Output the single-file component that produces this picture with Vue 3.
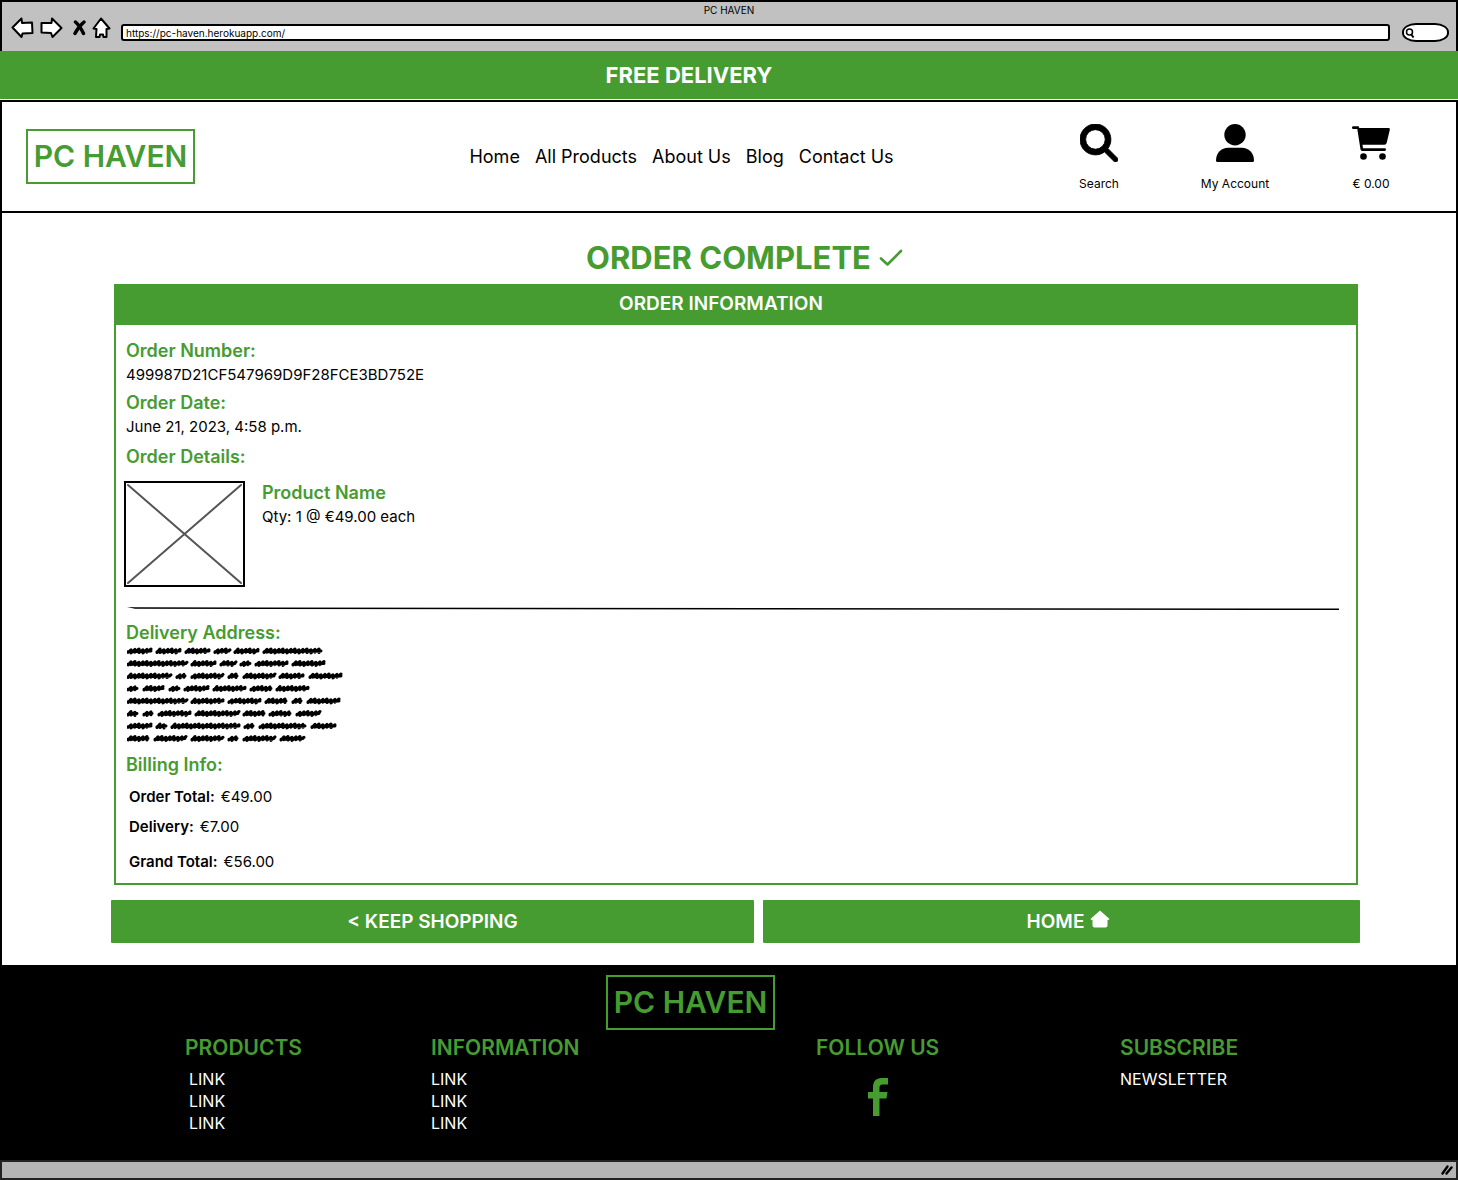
<script setup>
const navLinks = ['Home', 'All Products', 'About Us', 'Blog', 'Contact Us']
const footerLinks = ['LINK', 'LINK', 'LINK']

const orderFields = [
  { label: 'Order Number:', value: '499987D21CF547969D9F28FCE3BD752E' },
  { label: 'Order Date:', value: 'June 21, 2023, 4:58 p.m.' }
]

const totals = [
  { label: 'Order Total:', value: '€49.00' },
  { label: 'Delivery:', value: '€7.00' },
  { label: 'Grand Total:', value: '€56.00' }
]

// Start and end of every scribbled word, line by line
const addressLines = [
  [[0, 25], [29, 54], [58, 83], [87, 103], [107, 132], [136, 195]],
  [[0, 60], [64, 89], [93, 109], [113, 124], [128, 161], [165, 198]],
  [[0, 44], [49, 59], [64, 96], [101, 111], [116, 148], [152, 177], [182, 215]],
  [[0, 11], [16, 37], [42, 53], [57, 82], [86, 119], [123, 145], [149, 182]],
  [[0, 60], [64, 97], [101, 134], [138, 160], [165, 175], [180, 213]],
  [[0, 11], [16, 26], [31, 64], [68, 112], [116, 138], [142, 164], [169, 193]],
  [[0, 25], [29, 40], [44, 113], [117, 127], [132, 179], [184, 209]],
  [[0, 22], [27, 59], [64, 96], [101, 111], [116, 148], [153, 177]]
]

function scribble(line, row) {
  const y = 4 + row * 12.5
  return line
    .map(([from, to], word) => {
      let path = `M${from + 1} ${y + 1.5}`
      let up = true
      for (let x = from + 3; x <= to - 1; x += 2) {
        const swing = 1.2 + ((x * 7 + word * 3 + row) % 3) * 0.4
        path += ` L${x + (up ? 1 : -1)} ${y + (up ? -swing : swing)}`
        up = !up
      }
      return `${path} M${from + 1} ${y + 0.7} L${to - 1} ${y}`
    })
    .join(' ')
}
</script>

<template>
  <div class="window">
    <header class="chrome">
      <div class="chrome-title">PC HAVEN</div>
      <div class="chrome-bar">
        <button class="tool" aria-label="Back">
          <svg width="23" height="22" viewBox="0 0 23 22"><path class="sketch" d="M1.500 10.500 10.500 1.500 11 6 21 5.500 21.500 16 11.500 16.500 10.500 20Z" /></svg>
        </button>
        <button class="tool" aria-label="Forward">
          <svg width="23" height="22" viewBox="0 0 23 22"><path class="sketch" d="M21.500 11 12 1.500 11.500 6 1.500 6 1.500 15.500 11 16 12.500 20Z" /></svg>
        </button>
        <button class="tool stop" aria-label="Stop">
          <svg width="13" height="16" viewBox="0 0 13 16"><path d="M2.500 2Q7 6 10.500 13.500M11 2Q5 7 2 13.500" fill="none" stroke="#000" stroke-width="3.400" stroke-linecap="round" /></svg>
        </button>
        <button class="tool" aria-label="Home page">
          <svg width="19" height="22" viewBox="0 0 19 22"><path class="sketch" d="M9 1.500 1.500 11.500 4.500 12 4 20 7.500 20 8 17.500 11 17.500 11.500 20 14.500 20 14.500 12 17.500 11.500Z" /></svg>
        </button>
        <input class="address" type="text" aria-label="Address" value="https://pc-haven.herokuapp.com/" />
        <label class="finder">
          <svg width="10" height="10" viewBox="0 0 10 10"><circle cx="4.500" cy="4" r="3" fill="none" stroke="#000" stroke-width="1.500" /><path d="M6 6 8.500 9.500" stroke="#000" stroke-width="2" /></svg>
          <input type="text" aria-label="Search the web" />
        </label>
      </div>
    </header>

    <div class="promo">FREE DELIVERY</div>

    <div class="site-header">
      <a class="logo" href="#">PC HAVEN</a>
      <nav class="nav">
        <a v-for="link in navLinks" :key="link" href="#">{{ link }}</a>
      </nav>
      <div class="actions">
        <a href="#">
          <svg width="38" height="38" viewBox="0 0 512 512"><path d="M416 208c0 45.900-14.900 88.300-40 122.700L502.600 457.400c12.500 12.500 12.500 32.800 0 45.300s-32.800 12.500-45.300 0L330.700 376c-34.400 25.200-76.800 40-122.700 40C93.100 416 0 322.900 0 208S93.100 0 208 0s208 93.100 208 208zM208 340a132 132 0 1 0 0-264 132 132 0 1 0 0 264z" stroke="#000" stroke-width="12" /></svg>
          Search
        </a>
        <a href="#">
          <svg width="38" height="38" viewBox="0 0 38 38"><circle cx="19" cy="10.700" r="10.700" /><path d="M0 36.500C0 28.500 5.500 23.700 12 23.700H26C32.500 23.700 38 28.500 38 36.500Q38 38 36.500 38H1.500Q0 38 0 36.500Z" /></svg>
          My Account
        </a>
        <a href="#">
          <svg width="38" height="38" viewBox="0 0 38 38">
            <path d="M6.500 4H36.500Q38.200 4 37.800 5.800L34.800 18.500Q34.300 20.700 32.300 20.700H10.500L11 24.300H32.800Q34 24.300 34 25.600 34 27 32.800 27H10.200Q8.800 27 8.500 25.600L5.300 5H1.300Q0 5 0 3.500 0 2.200 1.300 2.200H6Q7.300 2.200 7.300 3.500Z" />
            <circle cx="11.500" cy="32.500" r="3.300" /><circle cx="30.500" cy="32.500" r="3.300" />
          </svg>
          € 0.00
        </a>
      </div>
    </div>

    <main class="content">
      <h1 class="title">
        ORDER COMPLETE
        <svg width="24" height="18" viewBox="0 0 24 18"><path d="M2 9.500 8.500 15.500 22 2" fill="none" stroke="currentColor" stroke-width="2.600" stroke-linecap="round" stroke-linejoin="round" /></svg>
      </h1>

      <section class="card">
        <h2 class="card-title">ORDER INFORMATION</h2>
        <div class="card-body">
          <div v-for="field in orderFields" :key="field.label" class="field">
            <h3>{{ field.label }}</h3>
            <p>{{ field.value }}</p>
          </div>
          <h3 class="details-title">Order Details:</h3>
          <div class="product">
            <svg width="121" height="106" viewBox="0 0 121 106" role="img" aria-label="Product image">
              <rect x="1" y="1" width="119" height="104" fill="#fff" stroke="#000" stroke-width="2" />
              <path d="M4 4 117 102M117 4 4 102" stroke="#555" stroke-width="2" stroke-linecap="round" />
            </svg>
            <div>
              <h3>Product Name</h3>
              <p>Qty: 1 @ €49.00 each</p>
            </div>
          </div>
          <svg class="rule" height="4" viewBox="0 0 1212 4" preserveAspectRatio="none" aria-hidden="true"><path d="M0 0 8 0.300 1212 1.500V3L8 1.800Z" /></svg>
          <h3>Delivery Address:</h3>
          <svg class="scribbles" width="216" height="96" viewBox="0 0 216 96" role="img" aria-label="Address lines">
            <path v-for="(line, row) in addressLines" :key="row" :d="scribble(line, row)" />
          </svg>
          <h3>Billing Info:</h3>
          <dl class="totals">
            <div v-for="total in totals" :key="total.label">
              <dt>{{ total.label }}</dt>
              <dd>{{ total.value }}</dd>
            </div>
          </dl>
        </div>
      </section>

      <div class="buttons">
        <button>&lt; KEEP SHOPPING</button>
        <button class="home">
          HOME
          <svg width="20" height="18" viewBox="0 0 20 18"><path d="M10 0.500 19.500 9 18.500 10H17.500V15.500Q17.500 17.500 15.500 17.500H4.500Q2.500 17.500 2.500 15.500V10H1.500L0.500 9Z" fill="#fff" /></svg>
        </button>
      </div>
    </main>

    <footer class="footer">
      <div class="footer-brand"><a class="logo" href="#">PC HAVEN</a></div>
      <div class="footer-columns">
        <section>
          <h2>PRODUCTS</h2>
          <ul class="inset">
            <li v-for="(link, i) in footerLinks" :key="i"><a href="#">{{ link }}</a></li>
          </ul>
        </section>
        <section>
          <h2>INFORMATION</h2>
          <ul>
            <li v-for="(link, i) in footerLinks" :key="i"><a href="#">{{ link }}</a></li>
          </ul>
        </section>
        <section class="follow">
          <h2>FOLLOW US</h2>
          <a href="#" aria-label="Facebook">
            <svg width="22" height="38" viewBox="0 0 22 38"><path d="M6 38V20.500H1V14H6V9.500C6 3.500 9 0 14.500 0H21V6.500H16C13.500 6.500 12.500 7.500 12.500 9.500V14H20.500L19.500 20.500H12.500V38Z" fill="currentColor" /></svg>
          </a>
        </section>
        <section>
          <h2>SUBSCRIBE</h2>
          <ul>
            <li><a href="#">NEWSLETTER</a></li>
          </ul>
        </section>
      </div>
    </footer>

    <div class="status">
      <svg width="12" height="12" viewBox="0 0 12 12"><path d="M1.500 9.500 6.500 2.500M5.500 9.500 10.500 3.500" stroke="#000" stroke-width="2.400" stroke-linecap="round" /></svg>
    </div>
  </div>
</template>

<style>
body {
  margin: 0;
}
</style>

<style scoped>
.window {
  --green: #469b31;
  display: flex;
  flex-direction: column;
  min-height: 100vh;
  background: #fff;
  color: #000;
  font-family: Inter, "Noto Sans", sans-serif;
  font-size: 15px;
  line-height: 24px;
}

.window *,
.window {
  box-sizing: border-box;
}

h1,
h2,
h3,
p,
ul,
dl,
dd {
  margin: 0;
  padding: 0;
}

ul {
  list-style: none;
}

a {
  color: inherit;
  text-decoration: none;
}

button,
input {
  font: inherit;
  color: inherit;
}

svg {
  display: block;
  flex-shrink: 0;
}

.chrome {
  height: 51px;
  border: 2px solid #000;
  border-width: 2px 2px 0;
  background: #c1c1c1;
}

.chrome-title {
  padding-top: 1px;
  font-size: 10px;
  line-height: 14px;
  text-align: center;
}

.chrome-bar {
  display: flex;
  align-items: center;
  gap: 6px;
  padding: 0 7px 0 9px;
}

.tool {
  padding: 0;
  border: 0;
  background: none;
}

.stop {
  margin-left: 4px;
}

.sketch {
  fill: #fff;
  stroke: #000;
  stroke-width: 2;
  stroke-linejoin: round;
}

.address {
  flex: 1;
  height: 17px;
  margin: 6px 6px 0 4px;
  padding: 0 3px;
  border: 2px solid #000;
  border-radius: 3px;
  background: #fff;
  font-size: 10px;
}

.finder {
  display: flex;
  align-items: center;
  width: 47px;
  height: 19px;
  margin-top: 6px;
  padding-left: 1px;
  border: 2px solid #000;
  border-radius: 14px / 9px;
  background: #fff;
}

.tool svg {
  margin-bottom: 3px;
}

.finder input {
  width: 26px;
  height: 10px;
  padding: 0;
  border: 0;
  background: none;
  font-size: 10px;
}

.promo {
  height: 48px;
  padding-right: 80px;
  background: var(--green);
  color: #fff;
  font-size: 22px;
  font-weight: 700;
  line-height: 48px;
  text-align: center;
}

.site-header {
  display: grid;
  grid-template-columns: auto 1fr auto;
  align-items: center;
  height: 113px;
  margin-top: 1px;
  padding: 0 17px 0 24px;
  border: 2px solid #000;
}

.logo {
  display: block;
  width: 169px;
  height: 55px;
  border: 2px solid var(--green);
  color: var(--green);
  font-size: 30px;
  font-weight: 600;
  line-height: 50px;
  text-align: center;
  white-space: nowrap;
}

.nav {
  display: flex;
  justify-self: center;
  gap: 15px;
  margin-left: 137px;
  font-size: 18px;
}

.actions {
  display: flex;
  padding-top: 4px;
}

.actions a {
  display: flex;
  flex-direction: column;
  align-items: center;
  gap: 12px;
  width: 136px;
  font-size: 12px;
  line-height: 20px;
}

.content {
  flex: 1;
  padding: 25px 96px 22px 109px;
  border: 2px solid #000;
  border-width: 0 2px;
}

.title {
  display: flex;
  align-items: center;
  justify-content: center;
  gap: 8px;
  margin-bottom: 6px;
  padding-left: 18px;
  color: var(--green);
  font-size: 31px;
  font-weight: 700;
  line-height: 40px;
}

.card {
  margin: 0 2px 0 3px;
  border: 2px solid var(--green);
}

.card-title {
  height: 39px;
  padding-right: 30px;
  background: var(--green);
  color: #fff;
  font-size: 19px;
  font-weight: 600;
  line-height: 36px;
  text-align: center;
}

.card-body {
  padding: 14px 17px 9px 8px;
}

h3 {
  padding-left: 2px;
  color: var(--green);
  font-size: 18px;
  font-weight: 600;
}

.field {
  margin-bottom: 4px;
}

.field p {
  padding-left: 2px;
}

.details-title {
  margin-top: 6px;
}

.product {
  display: flex;
  gap: 15px;
  margin: 12px 0 20px;
}

.product p {
  padding-left: 2px;
}

.rule {
  width: 100%;
  margin-bottom: 10px;
  padding-left: 3px;
}

.scribbles {
  margin: 2px 0 10px 3px;
  fill: none;
  stroke: #000;
  stroke-width: 3;
  stroke-linecap: round;
  stroke-linejoin: round;
}

.totals {
  display: flex;
  flex-direction: column;
  gap: 6px;
  padding: 8px 0 0 5px;
}

.totals div {
  display: flex;
  gap: 6px;
}

.totals div:last-child {
  padding-top: 5px;
}

.totals dt {
  font-weight: 600;
}

.buttons {
  display: grid;
  grid-template-columns: 643fr 597fr;
  gap: 9px;
  margin-top: 15px;
}

.buttons button {
  display: flex;
  align-items: center;
  justify-content: center;
  gap: 6px;
  height: 43px;
  border: 0;
  border-radius: 1px;
  background: var(--green);
  color: #fff;
  font-size: 19px;
  font-weight: 600;
}

.buttons .home {
  padding-left: 20px;
}

.home svg {
  margin-bottom: 5px;
}

.footer {
  height: 195px;
  padding-top: 10px;
  background: #000;
  color: #fff;
}

.footer-brand {
  display: flex;
  justify-content: center;
  padding-right: 77px;
}

.footer-columns {
  display: grid;
  grid-template-columns: 246fr 385fr 304fr 338fr;
  padding: 4px 0 0 185px;
  font-size: 16px;
  line-height: 22px;
}

.footer-columns h2 {
  margin-bottom: 6px;
  color: var(--green);
  font-size: 21px;
  font-weight: 600;
  line-height: 28px;
}

.inset {
  padding-left: 4px;
}

.follow {
  justify-self: start;
  color: var(--green);
}

.follow a {
  display: flex;
  justify-content: center;
  padding-top: 10px;
}

.status {
  display: flex;
  align-items: center;
  justify-content: flex-end;
  height: 20px;
  padding-right: 3px;
  border: 2px solid #222;
  background: #b5b5b5;
}
</style>
